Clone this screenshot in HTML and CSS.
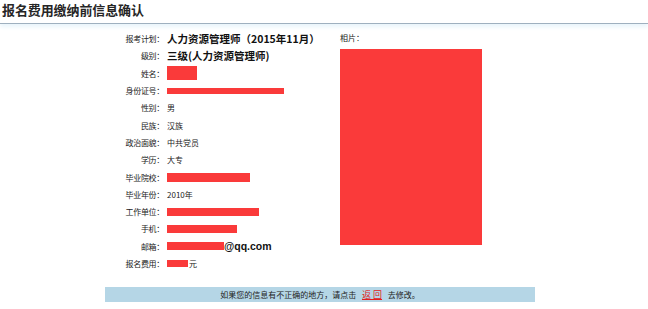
FILE: index.html
```html
<!DOCTYPE html>
<html lang="zh-CN">
<head>
<meta charset="utf-8">
<title>报名费用缴纳前信息确认</title>
<link rel="stylesheet" href="styles.css">
</head>
<body>
<header class="page-head">
  <h1 class="page-title">报名费用缴纳前信息确认</h1>
</header>
<main class="confirm">
  <div class="info">
    <div class="row"><span class="lbl">报考计划：</span><span class="val strong">人力资源管理师（2015年11月）</span></div>
    <div class="row"><span class="lbl">级别：</span><span class="val strong">三级(人力资源管理师)</span></div>
    <div class="row"><span class="lbl">姓名：</span><span class="val"><i class="mask m-name"></i></span></div>
    <div class="row"><span class="lbl">身份证号：</span><span class="val"><i class="mask m-id"></i></span></div>
    <div class="row"><span class="lbl">性别：</span><span class="val">男</span></div>
    <div class="row"><span class="lbl">民族：</span><span class="val">汉族</span></div>
    <div class="row"><span class="lbl">政治面貌：</span><span class="val">中共党员</span></div>
    <div class="row"><span class="lbl">学历：</span><span class="val">大专</span></div>
    <div class="row"><span class="lbl">毕业院校：</span><span class="val"><i class="mask m-school"></i></span></div>
    <div class="row"><span class="lbl">毕业年份：</span><span class="val">2010年</span></div>
    <div class="row"><span class="lbl">工作单位：</span><span class="val"><i class="mask m-work"></i></span></div>
    <div class="row"><span class="lbl">手机：</span><span class="val"><i class="mask m-phone"></i></span></div>
    <div class="row"><span class="lbl">邮箱：</span><span class="val"><i class="mask m-mail"></i><b class="mail">@qq.com</b></span></div>
    <div class="row"><span class="lbl">报名费用：</span><span class="val"><i class="mask m-fee"></i>元</span></div>
  </div>
  <div class="photo">
    <div class="photo-lbl">相片：</div>
    <div class="photo-box"></div>
  </div>
</main>
<div class="notice">如果您的信息有不正确的地方，请点击 <a class="back" href="#">返 回</a> 去修改。</div>
</body>
</html>
```

FILE: styles.css
```css
html, body {
  margin: 0;
  padding: 0;
  background: #ffffff;
}
body {
  font-family: "Noto Sans CJK SC", "Noto Sans", sans-serif;
  color: #222;
  width: 648px;
  height: 309px;
  overflow: hidden;
}
.page-head {
  height: 23px;
  border-bottom: 1px solid #9fb0bf;
  box-shadow: 0 3px 4px #eaf5fb;
}
.page-title {
  margin: 0;
  padding: 1px 0 0 2px;
  font-size: 13px;
  line-height: 18px;
  font-weight: bold;
  color: #262626;
  letter-spacing: -0.1px;
}
.confirm {
  display: flex;
  padding-top: 6px;
  height: 257px;
}
.info {
  width: 340px;
}
.row {
  display: flex;
  align-items: center;
  height: 17.3px;
}
.lbl {
  width: 164px;
  text-align: right;
  font-size: 8px;
  color: #222;
  white-space: nowrap;
  letter-spacing: -0.3px;
}
.val {
  padding-left: 3px;
  display: flex;
  align-items: center;
  font-size: 8px;
  color: #222;
  white-space: nowrap;
}
.val.strong {
  font-size: 10.5px;
  font-weight: bold;
  color: #111;
}
.mask {
  display: inline-block;
  background: #fa3a3a;
}
.m-name { width: 30px; height: 14px; }
.m-id { width: 117px; height: 6px; }
.m-school { width: 83px; height: 9px; }
.m-work { width: 92px; height: 8px; }
.m-phone { width: 70px; height: 8px; }
.m-mail { width: 57px; height: 8px; }
.m-fee { width: 21px; height: 7px; margin-right: 1px; }
.mail {
  font-family: "Liberation Sans", Arial, sans-serif;
  font-size: 10.5px;
  font-weight: bold;
  color: #111;
}
.photo {
  display: flex;
  flex-direction: column;
}
.photo-lbl {
  font-size: 8px;
  line-height: 13px;
  padding-top: 1px;
  color: #222;
}
.photo-box {
  margin-top: 5px;
  width: 142px;
  height: 196px;
  background: #fa3a3a;
}
.notice {
  margin-left: 105px;
  width: 430px;
  height: 15px;
  margin-top: 0;
  background: #b5d6e6;
  text-align: center;
  font-size: 8px;
  line-height: 15px;
  color: #222;
}
.back {
  color: #e02020;
  text-decoration: underline;
  font-size: 9px;
  margin: 0 4px;
}
```
